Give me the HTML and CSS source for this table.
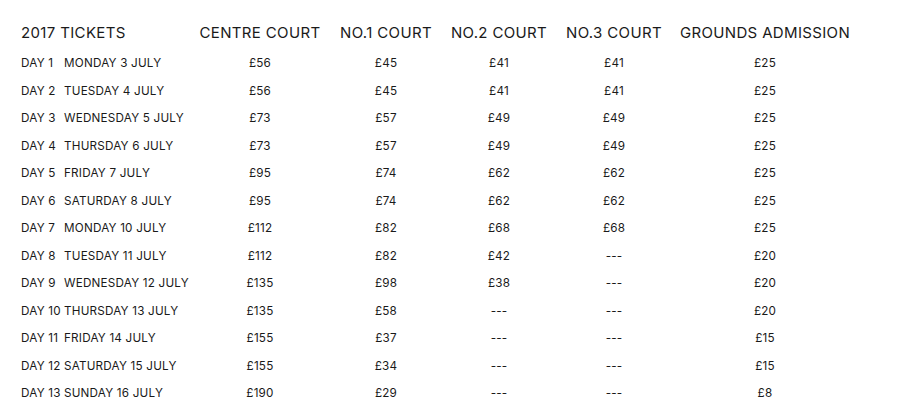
FILE: index.html
```html
<!DOCTYPE html>
<html lang="en">
<head>
<meta charset="utf-8">
<title>2017 Tickets</title>
<link rel="stylesheet" href="styles.css">
</head>
<body>
<div class="prices">
  <div class="row head">
    <div class="cell first">2017 TICKETS</div>
    <div class="cell">CENTRE COURT</div>
    <div class="cell">NO.1 COURT</div>
    <div class="cell">NO.2 COURT</div>
    <div class="cell">NO.3 COURT</div>
    <div class="cell">GROUNDS ADMISSION</div>
  </div>
  <div class="row"><div class="cell first"><span class="day">DAY 1</span><span>MONDAY 3 JULY</span></div><div class="cell">£56</div><div class="cell">£45</div><div class="cell">£41</div><div class="cell">£41</div><div class="cell">£25</div></div>
  <div class="row"><div class="cell first"><span class="day">DAY 2</span><span>TUESDAY 4 JULY</span></div><div class="cell">£56</div><div class="cell">£45</div><div class="cell">£41</div><div class="cell">£41</div><div class="cell">£25</div></div>
  <div class="row"><div class="cell first"><span class="day">DAY 3</span><span>WEDNESDAY 5 JULY</span></div><div class="cell">£73</div><div class="cell">£57</div><div class="cell">£49</div><div class="cell">£49</div><div class="cell">£25</div></div>
  <div class="row"><div class="cell first"><span class="day">DAY 4</span><span>THURSDAY 6 JULY</span></div><div class="cell">£73</div><div class="cell">£57</div><div class="cell">£49</div><div class="cell">£49</div><div class="cell">£25</div></div>
  <div class="row"><div class="cell first"><span class="day">DAY 5</span><span>FRIDAY 7 JULY</span></div><div class="cell">£95</div><div class="cell">£74</div><div class="cell">£62</div><div class="cell">£62</div><div class="cell">£25</div></div>
  <div class="row"><div class="cell first"><span class="day">DAY 6</span><span>SATURDAY 8 JULY</span></div><div class="cell">£95</div><div class="cell">£74</div><div class="cell">£62</div><div class="cell">£62</div><div class="cell">£25</div></div>
  <div class="row"><div class="cell first"><span class="day">DAY 7</span><span>MONDAY 10 JULY</span></div><div class="cell">£112</div><div class="cell">£82</div><div class="cell">£68</div><div class="cell">£68</div><div class="cell">£25</div></div>
  <div class="row"><div class="cell first"><span class="day">DAY 8</span><span>TUESDAY 11 JULY</span></div><div class="cell">£112</div><div class="cell">£82</div><div class="cell">£42</div><div class="cell">---</div><div class="cell">£20</div></div>
  <div class="row"><div class="cell first"><span class="day">DAY 9</span><span>WEDNESDAY 12 JULY</span></div><div class="cell">£135</div><div class="cell">£98</div><div class="cell">£38</div><div class="cell">---</div><div class="cell">£20</div></div>
  <div class="row"><div class="cell first"><span class="day">DAY 10</span><span>THURSDAY 13 JULY</span></div><div class="cell">£135</div><div class="cell">£58</div><div class="cell">---</div><div class="cell">---</div><div class="cell">£20</div></div>
  <div class="row"><div class="cell first"><span class="day">DAY 11</span><span>FRIDAY 14 JULY</span></div><div class="cell">£155</div><div class="cell">£37</div><div class="cell">---</div><div class="cell">---</div><div class="cell">£15</div></div>
  <div class="row"><div class="cell first"><span class="day">DAY 12</span><span>SATURDAY 15 JULY</span></div><div class="cell">£155</div><div class="cell">£34</div><div class="cell">---</div><div class="cell">---</div><div class="cell">£15</div></div>
  <div class="row"><div class="cell first"><span class="day">DAY 13</span><span>SUNDAY 16 JULY</span></div><div class="cell">£190</div><div class="cell">£29</div><div class="cell">---</div><div class="cell">---</div><div class="cell">£8</div></div>
</div>
</body>
</html>
```

FILE: styles.css
```css
html, body {
  margin: 0;
  padding: 0;
  background: #ffffff;
}

body {
  font-family: "Inter", "DejaVu Sans", sans-serif;
  color: #1a1a1a;
}

.prices {
  padding: 16px 0 0 21px;
  display: flex;
  flex-direction: column;
}

.row {
  display: grid;
  grid-template-columns: 169px 140px 112px 114px 116px 186px;
  align-items: center;
  height: 27.5px;
  font-size: 11.7px;
  letter-spacing: 0.2px;
  white-space: nowrap;
}

.row.head {
  height: 33.5px;
  padding-bottom: 1px;
  box-sizing: border-box;
  font-size: 15px;
  letter-spacing: 0.35px;
}

.cell {
  text-align: center;
}

.cell.first {
  text-align: left;
  display: flex;
}

.day {
  width: 43px;
  flex: none;
}
```
